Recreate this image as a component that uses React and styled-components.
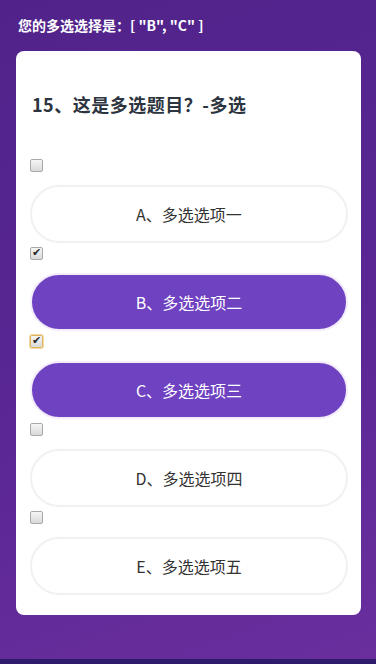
import React, { useState } from "react";
import styled, { createGlobalStyle } from "styled-components";

const GlobalStyle = createGlobalStyle`
  html, body {
    margin: 0;
    padding: 0;
    background: #2e1b6c;
    font-family: "Liberation Sans", "Noto Sans CJK SC", sans-serif;
  }
`;

const options = [
  { key: "A", label: "多选选项一" },
  { key: "B", label: "多选选项二" },
  { key: "C", label: "多选选项三" },
  { key: "D", label: "多选选项四" },
  { key: "E", label: "多选选项五" },
];

export default function App() {
  const [picked, setPicked] = useState(["B", "C"]);

  const toggle = (key) => {
    setPicked((prev) =>
      prev.includes(key) ? prev.filter((k) => k !== key) : [...prev, key].sort()
    );
  };

  return (
    <>
      <GlobalStyle />
      <Page>
        <Result>
          您的多选选择是：[ {picked.map((k) => `"${k}"`).join(", ")} ]
        </Result>
        <Card>
          <Question>15、这是多选题目？-多选</Question>
          {options.map((opt) => {
            const active = picked.includes(opt.key);
            return (
              <Item key={opt.key}>
                <Check
                  type="checkbox"
                  checked={active}
                  $focus={opt.key === "C"}
                  onChange={() => toggle(opt.key)}
                />
                <Option $active={active} onClick={() => toggle(opt.key)}>
                  {opt.key}、{opt.label}
                </Option>
              </Item>
            );
          })}
        </Card>
      </Page>
    </>
  );
}

const Page = styled.div`
  box-sizing: border-box;
  height: 659px;
  padding: 17px 15px 0 16px;
  background: linear-gradient(160deg, #50238a 0%, #5a2794 55%, #6a2e9d 100%);
`;

const Result = styled.div`
  padding-left: 2px;
  height: 34px;
  font-size: 14px;
  font-weight: bold;
  line-height: 16px;
  color: #ffffff;
  font-family: "Noto Sans CJK SC", sans-serif;
`;

const Card = styled.div`
  background: #ffffff;
  border-radius: 8px;
  padding: 36px 13px 20px 14px;
`;

const Question = styled.h2`
  margin: 0 0 34px 2px;
  font-size: 18px;
  line-height: 34px;
  font-weight: bold;
  letter-spacing: 0.5px;
  color: #2c3440;
  font-family: "Noto Sans CJK SC", sans-serif;
`;

const Item = styled.div`
  display: flex;
  flex-direction: column;
`;

const Check = styled.input`
  appearance: none;
  -webkit-appearance: none;
  position: relative;
  display: block;
  box-sizing: border-box;
  width: 13px;
  height: 13px;
  margin: 4px 0 13px 0;
  border: 1px solid ${(p) => (p.$focus ? "#e0b45a" : "#a9a9a9")};
  border-radius: 2px;
  background: linear-gradient(#f6f6f6, #d9d9d9);
  box-shadow: ${(p) => (p.$focus ? "0 0 0 1px #f0d9a4" : "none")};

  &:checked::after {
    content: "✔";
    position: absolute;
    left: 1px;
    top: -1px;
    font-size: 11px;
    line-height: 12px;
    color: #2a2a2a;
    font-family: "DejaVu Sans", sans-serif;
  }
`;

const Option = styled.div`
  box-sizing: border-box;
  height: 58px;
  border-radius: 29px;
  border: 2px solid ${(p) => (p.$active ? "#f3ecfb" : "#f1f1f1")};
  background: ${(p) => (p.$active ? "#6f42c1" : "#ffffff")};
  color: ${(p) => (p.$active ? "#ffffff" : "#333333")};
  display: flex;
  align-items: center;
  justify-content: center;
  font-size: 16px;
  font-family: "Noto Sans CJK SC", sans-serif;
  cursor: pointer;
`;
